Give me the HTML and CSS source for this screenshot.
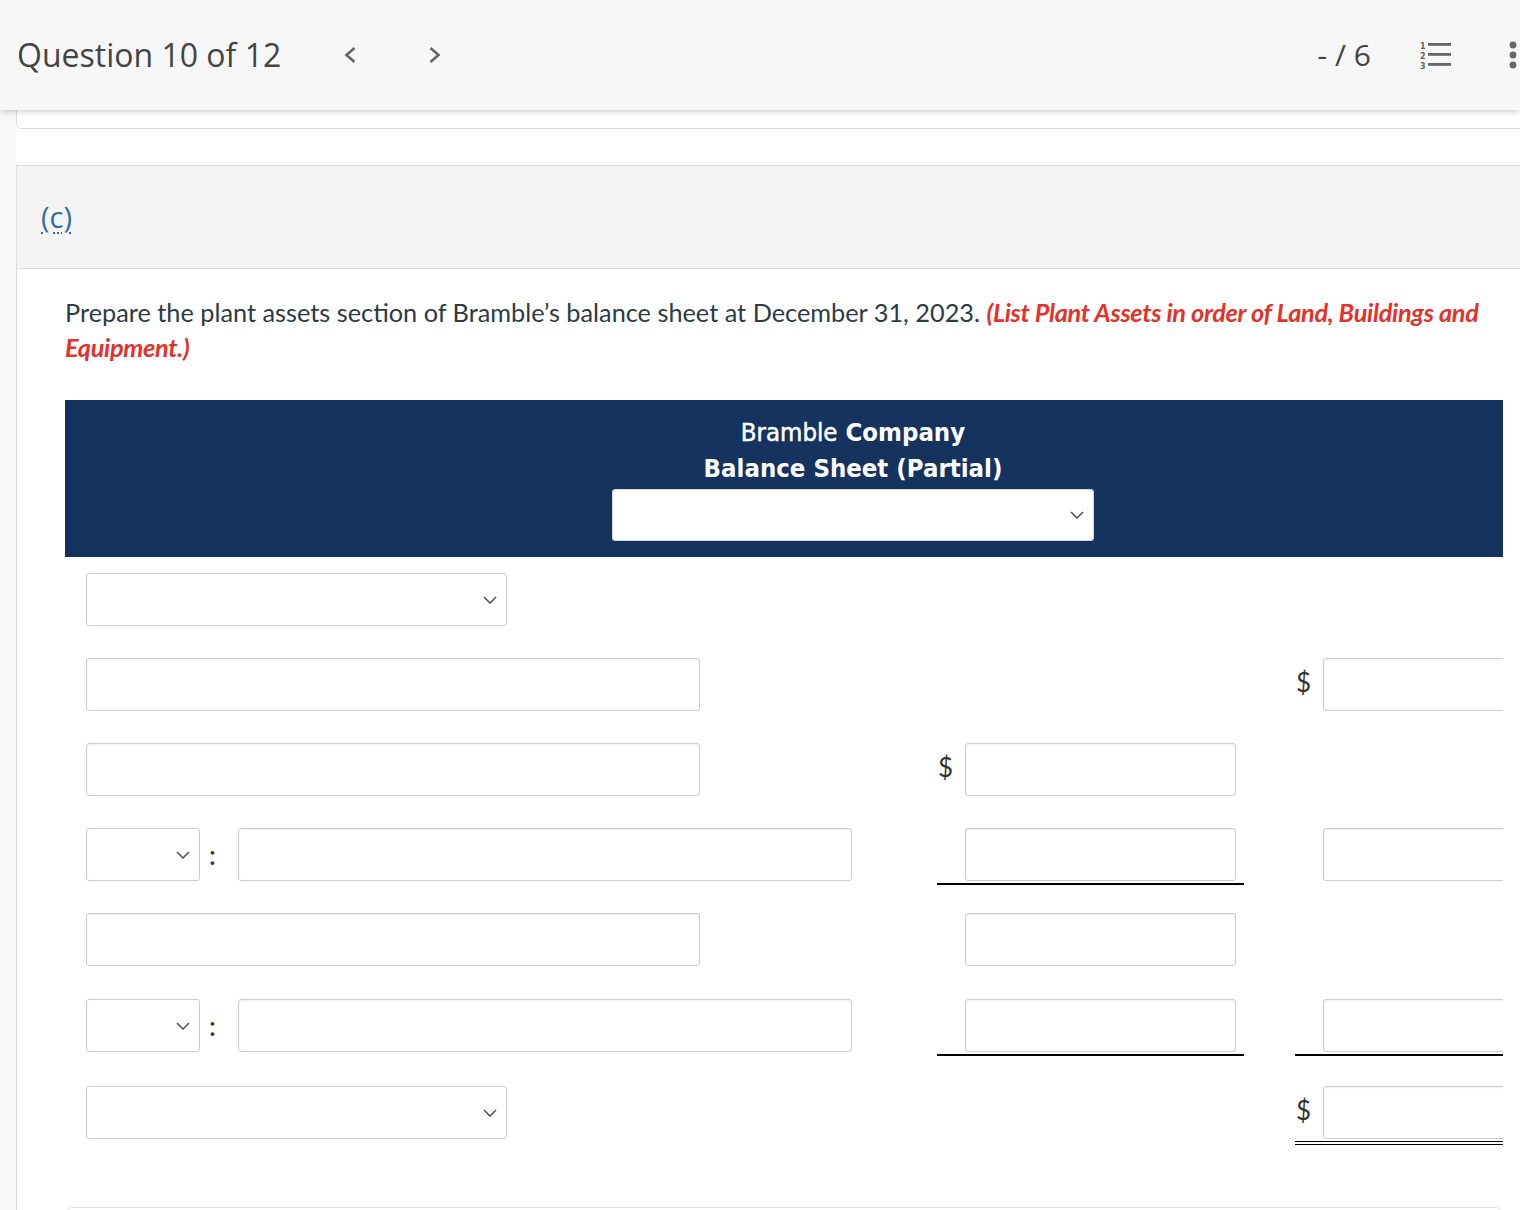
FILE: index.html
```html
<!DOCTYPE html>
<html lang="en">
<head>
<meta charset="utf-8">
<title>Question 10 of 12</title>
<link rel="stylesheet" href="styles.css">
</head>
<body>
<header class="topbar">
  <div class="qnav">
    <span class="qtitle">Question 10 of 12</span>
    <button class="navbtn prev" aria-label="Previous question"><svg width="14" height="18" viewBox="0 0 14 18"><path d="M11.5 2 L3.5 9 L11.5 16"/></svg></button>
    <button class="navbtn next" aria-label="Next question"><svg width="14" height="18" viewBox="0 0 14 18"><path d="M2.5 2 L10.5 9 L2.5 16"/></svg></button>
  </div>
  <div class="qtools">
    <span class="score">- / 6</span>
    <svg class="listicon" width="32" height="28" viewBox="0 0 32 28">
      <text x="0" y="8" class="num">1</text>
      <text x="0" y="18" class="num">2</text>
      <text x="0" y="28" class="num">3</text>
      <rect x="8" y="2" width="23" height="2.8"/>
      <rect x="8" y="12" width="23" height="2.8"/>
      <rect x="8" y="22" width="23" height="2.8"/>
    </svg>
    <svg class="kebab" width="8" height="28" viewBox="0 0 8 28">
      <circle cx="4" cy="4" r="3.4"/>
      <circle cx="4" cy="14" r="3.4"/>
      <circle cx="4" cy="24" r="3.4"/>
    </svg>
  </div>
</header>

<main class="main">
  <div class="prev-card"></div>
  <section class="part">
    <div class="part-head"><a class="part-link" href="#">(c)</a></div>
    <div class="part-body">
      <p class="prompt">Prepare the plant assets section of Bramble’s balance sheet at December 31, 2023. <strong class="note">(List Plant Assets in order of Land, Buildings and Equipment.)</strong></p>

      <div class="sheet">
        <div class="sheet-head">
          <div class="sheet-title"><span class="light">Bramble</span> Company</div>
          <div class="sheet-title">Balance Sheet (Partial)</div>
          <div class="pick pick-date"><svg class="chev" width="14" height="8" viewBox="0 0 14 8"><path d="M1 1 L7 7 L13 1"/></svg></div>
        </div>

        <div class="sheet-body">
          <div class="row">
            <div class="lab"><div class="pick pick-wide"><svg class="chev" width="14" height="8" viewBox="0 0 14 8"><path d="M1 1 L7 7 L13 1"/></svg></div></div>
            <div class="amt"></div>
            <div class="amt amt2"></div>
          </div>

          <div class="row">
            <div class="lab"><input class="field field-wide" type="text"></div>
            <div class="amt"></div>
            <div class="amt amt2"><span class="dollar">$</span><input class="field" type="text"></div>
          </div>

          <div class="row">
            <div class="lab"><input class="field field-wide" type="text"></div>
            <div class="amt"><span class="dollar">$</span><input class="field" type="text"></div>
            <div class="amt amt2"></div>
          </div>

          <div class="row">
            <div class="lab">
              <div class="pick pick-small"><svg class="chev" width="14" height="8" viewBox="0 0 14 8"><path d="M1 1 L7 7 L13 1"/></svg></div>
              <span class="colon">:</span>
              <input class="field field-wide" type="text">
            </div>
            <div class="amt ul"><span class="dollar"></span><input class="field" type="text"></div>
            <div class="amt amt2"><span class="dollar"></span><input class="field" type="text"></div>
          </div>

          <div class="row row-b">
            <div class="lab"><input class="field field-wide" type="text"></div>
            <div class="amt"><span class="dollar"></span><input class="field" type="text"></div>
            <div class="amt amt2"></div>
          </div>

          <div class="row row-c">
            <div class="lab">
              <div class="pick pick-small"><svg class="chev" width="14" height="8" viewBox="0 0 14 8"><path d="M1 1 L7 7 L13 1"/></svg></div>
              <span class="colon">:</span>
              <input class="field field-wide" type="text">
            </div>
            <div class="amt ul"><span class="dollar"></span><input class="field" type="text"></div>
            <div class="amt amt2 ul"><span class="dollar"></span><input class="field" type="text"></div>
          </div>

          <div class="row">
            <div class="lab"><div class="pick pick-wide"><svg class="chev" width="14" height="8" viewBox="0 0 14 8"><path d="M1 1 L7 7 L13 1"/></svg></div></div>
            <div class="amt"></div>
            <div class="amt amt2 dul"><span class="dollar">$</span><input class="field" type="text"></div>
          </div>
        </div>
      </div>

      <div class="next-box"></div>
    </div>
  </section>
</main>
</body>
</html>
```

FILE: styles.css
```css
* { box-sizing: border-box; }

html, body {
  margin: 0;
  padding: 0;
}

body {
  width: 1520px;
  height: 1210px;
  overflow: hidden;
  background: #f8f8f8;
  font-family: "Open Sans", "Liberation Sans", sans-serif;
}

/* ---------- top bar ---------- */
.topbar {
  position: relative;
  z-index: 2;
  height: 110px;
  background: #f7f7f7;
  box-shadow: 0 2px 6px rgba(0, 0, 0, 0.18);
  display: flex;
  align-items: center;
  justify-content: space-between;
  padding-left: 17px;
}

.qnav {
  display: flex;
  align-items: center;
}

.qtitle {
  font-size: 32px;
  color: #444;
  line-height: 40px;
}

.navbtn {
  background: none;
  border: 0;
  padding: 0;
  display: flex;
  cursor: pointer;
}

.navbtn path {
  fill: none;
  stroke: #666;
  stroke-width: 2.6;
}

.prev { margin-left: 62px; }
.next { margin-left: 71px; }

.qtools {
  display: flex;
  align-items: center;
}

.score {
  font-size: 30px;
  color: #444;
  margin-right: 49px;
  line-height: 40px;
}

.listicon {
  margin-right: 57px;
  fill: #666;
  overflow: visible;
}

.listicon .num {
  font-family: "DejaVu Sans", sans-serif;
  font-size: 8px;
  font-weight: 700;
}

.kebab {
  margin-right: 3px;
  fill: #666;
}

/* ---------- main area ---------- */
.main {
  margin-left: 16px;
  background: #fff;
  height: 1100px;
}

.prev-card {
  height: 19px;
  border-left: 1px solid #ddd;
  border-bottom: 1px solid #ddd;
  border-bottom-left-radius: 5px;
  margin-bottom: 36px;
}

.part {
  border-left: 1px solid #ddd;
  border-top: 1px solid #ddd;
}

.part-head {
  height: 103px;
  background: #f4f4f4;
  border-bottom: 1px solid #ddd;
  display: flex;
  align-items: center;
  padding-left: 24px;
}

.part-link {
  font-size: 29px;
  line-height: 36px;
  color: #2e6ea6;
  text-decoration: underline dotted;
  text-decoration-thickness: 2px;
  text-underline-offset: 4px;
}

.part-body {
  padding: 26px 17px 0 48px;
}

.prompt {
  margin: 0;
  font-family: Lato, "Open Sans", sans-serif;
  font-size: 25.3px;
  line-height: 35px;
  color: #2d3b45;
}

.note {
  color: #e4312b;
  font-style: italic;
  font-weight: 700;
  letter-spacing: -0.3px;
}

/* ---------- balance sheet ---------- */
.sheet {
  margin-top: 35px;
  overflow: hidden;
}

.sheet-head {
  width: 1576px;
  background: #15335f;
  color: #fff;
  text-align: center;
  padding: 14px 0 16px;
}

.sheet-title {
  font-family: "DejaVu Sans Condensed", "DejaVu Sans", sans-serif;
  font-stretch: condensed;
  font-size: 25.5px;
  font-weight: 700;
  line-height: 36px;
}

.sheet-title .light {
  font-weight: 400;
  -webkit-text-stroke: 0.5px #fff;
}

.pick {
  height: 53px;
  border: 1px solid #ccc;
  border-radius: 3px;
  background: #fff;
  display: flex;
  align-items: center;
  justify-content: flex-end;
  padding-right: 9px;
  flex: none;
}

.pick-date {
  width: 482px;
  height: 52px;
  margin: 3px auto 0;
  border-color: #d6d6d6;
}

.pick-wide { width: 421px; }
.pick-small { width: 114px; }

.chev path {
  fill: none;
  stroke: #555;
  stroke-width: 1.6;
}

.sheet-body {
  padding: 16px 0 0 21px;
}

.row {
  display: flex;
  align-items: flex-start;
  height: 53px;
  margin-bottom: 32px;
}

.row-b { margin-bottom: 33px; }
.row-c { margin-bottom: 34px; }

.lab {
  width: 851px;
  height: 53px;
  display: flex;
  align-items: center;
  flex: none;
}

.colon {
  width: 38px;
  padding-left: 9px;
  font-size: 25px;
  font-weight: 600;
  color: #333;
  line-height: 50px;
}

.amt {
  width: 307px;
  height: 53px;
  display: flex;
  padding-right: 8px;
  flex: none;
}

.amt2 {
  width: 208px;
  margin-left: 51px;
  padding-right: 0;
  overflow: hidden;
}

.dollar {
  width: 28px;
  flex: none;
  padding-left: 1px;
  font-family: Lato, "Open Sans", sans-serif;
  font-size: 26px;
  line-height: 49px;
  color: #333;
}

.field {
  height: 53px;
  width: 271px;
  flex: none;
  border: 1px solid #ccc;
  border-radius: 3px;
  background: #fff;
  box-shadow: inset 0 1px 2px rgba(0, 0, 0, 0.07);
  font: inherit;
  margin: 0;
  padding: 0 10px;
}

.amt2 .field { width: 200px; }
.field-wide { width: 614px; }

.ul {
  height: 57px;
  padding-bottom: 2px;
  border-bottom: 2px solid #000;
}

.dul {
  height: 59px;
  padding-bottom: 2px;
  border-bottom: 4px double #000;
}

.next-box {
  margin-top: 36px;
  height: 60px;
  border: 1px solid #e2e2e2;
  border-radius: 8px;
  box-shadow: 0 -1px 3px rgba(0, 0, 0, 0.04);
}
```
